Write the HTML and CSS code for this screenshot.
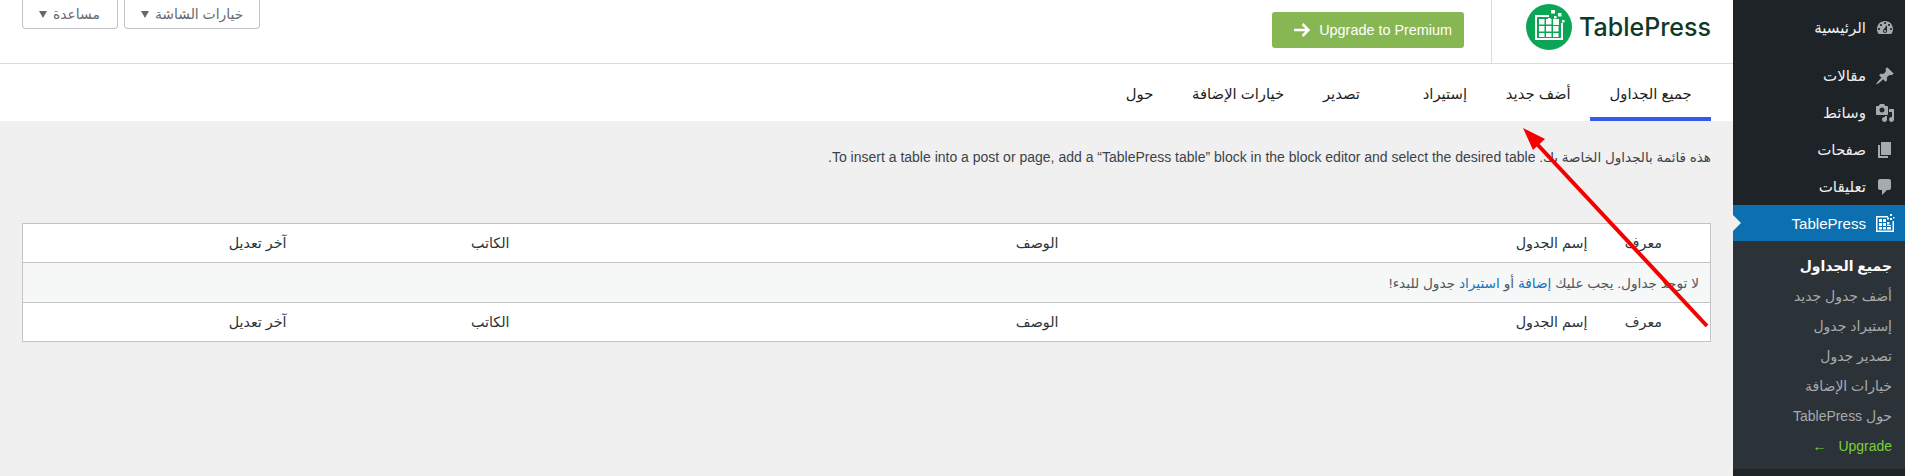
FILE: index.html
```html
<!DOCTYPE html>
<html lang="ar" dir="rtl">
<head>
  <meta charset="UTF-8">
  <meta name="viewport" content="width=device-width, initial-scale=1.0">
  <title>TablePress</title>
  <link rel="stylesheet" href="styles.css">
</head>
<body>
  <div class="wrap">
    <!-- menu lateral -->
    <nav class="side">
      <ul class="side-menu">
        <li class="side-item side-home">
          <svg class="side-icon" viewBox="0 0 20 20"><path d="M3.76 16h12.48c1.1-1.37 1.76-3.11 1.76-5 0-4.42-3.58-8-8-8s-8 3.58-8 8c0 1.89.66 3.63 1.76 5zM10 4c.55 0 1 .45 1 1s-.45 1-1 1-1-.45-1-1 .45-1 1-1zM6 6c.55 0 1 .45 1 1s-.45 1-1 1-1-.45-1-1 .45-1 1-1zm8 0c.55 0 1 .45 1 1s-.45 1-1 1-1-.45-1-1 .45-1 1-1zm-5.37 5.55L12 7v6c0 1.1-.9 2-2 2s-2-.9-2-2c0-.57.24-1.08.63-1.45zM4 10c.55 0 1 .45 1 1s-.45 1-1 1-1-.45-1-1 .45-1 1-1zm12 0c.55 0 1 .45 1 1s-.45 1-1 1-1-.45-1-1 .45-1 1-1zm-5 3c0-.55-.45-1-1-1s-1 .45-1 1 .45 1 1 1 1-.45 1-1z"/></svg>
          <span>الرئيسية</span>
        </li>
        <li class="side-item">
          <svg class="side-icon" viewBox="0 0 20 20"><path d="M10.44 3.02l1.82-1.82 6.36 6.35-1.83 1.82c-1.05-.68-2.48-.57-3.41.36l-.75.75c-.92.93-1.04 2.35-.35 3.41l-1.83 1.82-2.41-2.41-2.8 2.79c-.42.42-3.38 2.71-3.8 2.29s1.86-3.39 2.28-3.81l2.79-2.79L4.1 9.36l1.83-1.82c1.05.69 2.48.57 3.4-.36l.75-.75c.93-.92 1.05-2.35.36-3.41z"/></svg>
          <span>مقالات</span>
        </li>
        <li class="side-item">
          <svg class="side-icon" viewBox="0 0 20 20"><path d="M13 11V4c0-.55-.45-1-1-1h-1.67L9 1H5L3.67 3H2c-.55 0-1 .45-1 1v7c0 .55.45 1 1 1h10c.55 0 1-.45 1-1zM7 4.5c1.38 0 2.5 1.12 2.5 2.5S8.38 9.5 7 9.5 4.5 8.38 4.5 7 5.62 4.5 7 4.5zM14 6h5v10.5c0 1.38-1.12 2.5-2.5 2.5S14 17.88 14 16.5s1.12-2.5 2.5-2.5c.17 0 .34.02.5.05V9h-3V6zm-4 8.05V13h2v3.5c0 1.38-1.12 2.5-2.5 2.5S7 17.88 7 16.5 8.12 14 9.5 14c.17 0 .34.02.5.05z"/></svg>
          <span>وسائط</span>
        </li>
        <li class="side-item">
          <svg class="side-icon" viewBox="0 0 20 20"><path d="M6 15V2h10v13H6zm-1 1h8v2H3V5h2v11z"/></svg>
          <span>صفحات</span>
        </li>
        <li class="side-item">
          <svg class="side-icon" viewBox="0 0 20 20"><path d="M5 2h9c1.1 0 2 .9 2 2v7c0 1.1-.9 2-2 2h-2l-5 5v-5H5c-1.1 0-2-.9-2-2V4c0-1.1.9-2 2-2z"/></svg>
          <span>تعليقات</span>
        </li>
        <li class="side-item side-current">
          <svg class="side-icon" viewBox="0 0 20 20">
            <path d="M1 3h12v1.500H2.500V17.500h15V8H19v11H1z"/>
            <path d="M4 6h3v3H4zM8 6h3v3H8zM12 9h2.500v2.500H12zM4 10h3v3H4zM8 10h3v3H8zM12 12h4v1H12zM4 14h3v2.500H4zM8 14h3v2.500H8zM12 14h4v2.500H12zM15 5h2v2h-2zM12 4.500h2v2h-2zM15 1h2v2h-2zM18 4h1.500v1.500H18z"/>
          </svg>
          <span>TablePress</span>
        </li>
      </ul>
      <ul class="side-sub">
        <li class="sub-active">جميع الجداول</li>
        <li>أضف جدول جديد</li>
        <li>إستيراد جدول</li>
        <li>تصدير جدول</li>
        <li>خيارات الإضافة</li>
        <li>حول TablePress</li>
        <li class="sub-upgrade">Upgrade <span class="sub-arrow">←</span></li>
      </ul>
    </nav>

    <main class="main">
      <!-- cabecera -->
      <header class="top">
        <div class="logo">
          <svg class="logo-mark" viewBox="0 0 46 46">
            <circle cx="23" cy="23" r="23" fill="#0aa656"/>
            <g fill="#fff">
              <path d="M9 11h14v2H11v21h24V19h2v17H9z"/>
              <path d="M13 15h5.500v5.500H13zM20 15h5.500v5.500H20zM13 22h5.500v5.500H13zM20 22h5.500v5.500H20zM27 22h5.500v5.500H27zM13 29h5.500v4H13zM20 29h5.500v4H20zM27 29h5.500v4H27zM27 15h6v6h-6zM25 6h4v3.500h-4zM32 9h3.500v3.500H32zM28 12h2.500v2.500H28zM36 16h2.500v2.500H36zM22 14h2.500v2.500H22z"/>
            </g>
          </svg>
          <span class="logo-text" dir="ltr">TablePress</span>
        </div>
        <a class="premium">
          <span>Upgrade to Premium</span>
          <svg class="premium-arrow" viewBox="0 0 20 20"><path d="M2 10h14M10.500 4l6 6-6 6"/></svg>
        </a>
        <div class="meta">
          <button class="meta-btn">خيارات الشاشة <i class="meta-caret"></i></button>
          <button class="meta-btn meta-help">مساعدة <i class="meta-caret"></i></button>
        </div>
      </header>

      <!-- pestañas -->
      <div class="tabs">
        <a class="tab tab-active">جميع الجداول</a>
        <a class="tab">أضف جديد</a>
        <a class="tab tab-gap">إستيراد</a>
        <a class="tab">تصدير</a>
        <a class="tab">خيارات الإضافة</a>
        <a class="tab">حول</a>
      </div>

      <div class="content">
        <p class="intro">هذه قائمة بالجداول الخاصة بك. <span class="intro-en">To insert a table into a post or page, add a “TablePress table” block in the block editor and select the desired table.</span></p>

        <table class="list">
          <colgroup>
            <col class="col-id">
            <col class="col-name">
            <col class="col-desc">
            <col class="col-author">
            <col>
          </colgroup>
          <thead>
            <tr>
              <th class="cell-id">معرف</th>
              <th>إسم الجدول</th>
              <th>الوصف</th>
              <th>الكاتب</th>
              <th>آخر تعديل</th>
            </tr>
          </thead>
          <tbody>
            <tr class="list-empty">
              <td colspan="5">لا توجد جداول. يجب عليك <a>إضافة</a> أو <a>استيراد</a> جدول للبدء!</td>
            </tr>
          </tbody>
          <tfoot>
            <tr>
              <th class="cell-id">معرف</th>
              <th>إسم الجدول</th>
              <th>الوصف</th>
              <th>الكاتب</th>
              <th>آخر تعديل</th>
            </tr>
          </tfoot>
        </table>
      </div>
    </main>
  </div>

  <!-- flecha roja encima de la captura -->
  <svg class="pointer" viewBox="0 0 1905 476">
    <line x1="1707" y1="326" x2="1537" y2="144"/>
    <polygon points="1523,128 1545,139 1533,150"/>
  </svg>
</body>
</html>
```

FILE: styles.css
```css
*{
  margin: 0;
  padding: 0;
  box-sizing: border-box;
}

html,
body{
  height: 100%;
  overflow: hidden;
}

body{
  position: relative;
  font-family: "Liberation Sans", "DejaVu Sans", sans-serif;
  font-size: 13.9px;
  color: #3c434a;
  background-color: #f0f0f1;
}

ul{
  list-style: none;
}

.wrap{
  display: flex;
  min-height: 100%;
}

/* menu lateral */
.side{
  flex: 0 0 172px;
  background-color: #1d2327;
  color: #f0f0f1;
  font-size: 15.05px;
}

.side-menu{
  padding-top: 9px;
}

.side-item{
  display: flex;
  align-items: center;
  gap: 9px;
  height: 37px;
  padding-right: 10px;
}

.side-home{
  margin-bottom: 11px;
}

.side-icon{
  flex: 0 0 20px;
  width: 20px;
  height: 20px;
  fill: #a7aaad;
}

.side-current{
  position: relative;
  height: 36px;
  background-color: #0b6fb0;
  color: #fff;
}

.side-current .side-icon{
  fill: #fff;
}

.side-current::after{
  content: "";
  position: absolute;
  left: 0;
  top: 10px;
  border-top: 8px solid transparent;
  border-bottom: 8px solid transparent;
  border-left: 8px solid #f0f0f1;
}

.side-sub{
  padding: 10px 0 8px;
  background-color: #2c3338;
  color: #a7aaad;
}

.side-sub li{
  height: 30px;
  line-height: 30px;
  padding-right: 13px;
  font-size: 13.975px;
}

.side-sub .sub-active{
  color: #fff;
  font-weight: bold;
}

.side-sub .sub-upgrade{
  color: #7ad03a;
}

.sub-arrow{
  margin-right: 8px;
}

/* cabecera */
.main{
  flex: 1;
  min-width: 0;
}

.top{
  display: flex;
  align-items: flex-start;
  height: 64px;
  background-color: #fff;
  border-bottom: 1px solid #dcdcde;
}

.logo{
  display: flex;
  align-items: center;
  gap: 7px;
  width: 242px;
  height: 63px;
  padding: 0 22px 9px 0;
  border-left: 1px solid #dcdcde;
  direction: ltr;
  justify-content: flex-end;
}

.logo-mark{
  width: 46px;
  height: 46px;
}

.logo-text{
  font-family: Inter, "Liberation Sans", sans-serif;
  font-size: 25px;
  font-weight: 500;
  color: #0f3a28;
}

.premium{
  display: flex;
  align-items: center;
  gap: 7px;
  height: 36px;
  margin: 12px 27px 0 0;
  padding: 0 12px 0 20px;
  border-radius: 3px;
  font-size: 14.4px;
  color: #fff;
  background-color: #87b753;
}

.premium-arrow{
  width: 20px;
  height: 20px;
  fill: none;
  stroke: #fff;
  stroke-width: 2.500;
}

.meta{
  display: flex;
  gap: 6px;
  margin-right: auto;
  margin-left: 22px;
}

.meta-btn{
  display: flex;
  align-items: center;
  gap: 6px;
  height: 29px;
  padding: 0 16px;
  border: 1px solid #c3c4c7;
  border-top: 0;
  border-radius: 0 0 4px 4px;
  background-color: #fff;
  color: #646970;
  font: inherit;
}

.meta-help{
  padding: 0 17px 0 16px;
}

.meta-caret{
  border-top: 7px solid #646970;
  border-left: 4.500px solid transparent;
  border-right: 4.500px solid transparent;
}

/* pestañas */
.tabs{
  display: flex;
  height: 57px;
  padding-right: 22px;
  background-color: #fff;
  font-size: 14.8px;
  color: #1e1e1e;
}

.tab{
  padding: 4px 19.400px 0;
  line-height: 52px;
  border-bottom: 4px solid transparent;
}

.tab-active{
  border-bottom-color: #3858e9;
}

.tab-gap{
  margin-left: 24px;
}

/* contenido */
.content{
  padding: 26px 22px 0;
}

.intro{
  line-height: 20px;
  margin-bottom: 55px;
  font-size: 13.5px;
}

.intro-en{
  font-size: 14px;
}

.list{
  width: 100%;
  table-layout: fixed;
  border-collapse: collapse;
  border: 1px solid #c3c4c7;
  background-color: #fff;
  color: #2c3338;
}

.col-id{
  width: 111px;
}

.col-name{
  width: 529px;
}

.col-desc{
  width: 549px;
}

.col-author{
  width: 223px;
}

.list th{
  height: 39px;
  padding: 0 12px;
  font-size: 14.3px;
  font-weight: normal;
  text-align: right;
}

.list .cell-id{
  padding-right: 48px;
}

.list-empty td{
  height: 40px;
  padding: 0 11px;
  font-size: 13.7px;
  background-color: #f6f7f7;
  border-top: 1px solid #c3c4c7;
  border-bottom: 1px solid #c3c4c7;
  color: #50575e;
}

.list-empty a{
  color: #2271b1;
}

/* flecha */
.pointer{
  position: absolute;
  top: 0;
  left: 0;
  width: 1905px;
  height: 476px;
  pointer-events: none;
}

.pointer line{
  stroke: #f50000;
  stroke-width: 4;
}

.pointer polygon{
  fill: #f50000;
}
```
